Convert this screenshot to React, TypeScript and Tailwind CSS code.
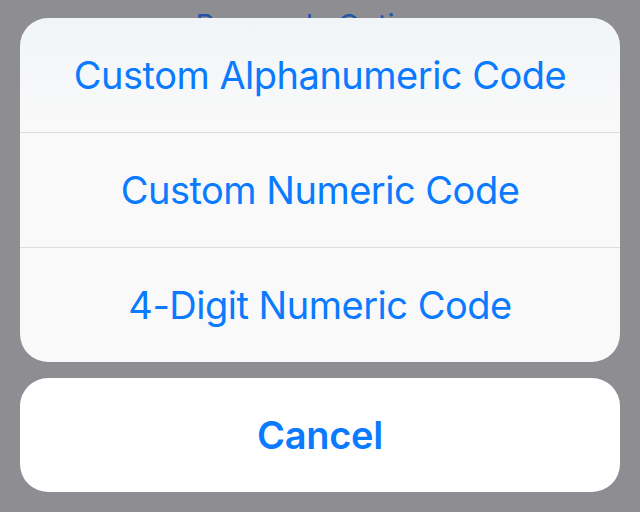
import React from 'react';

const options = ['Custom Alphanumeric Code', 'Custom Numeric Code', '4-Digit Numeric Code'];

export default function App() {
  return (
    <div
      className="w-[640px] h-[512px] bg-[#8e8d92] overflow-hidden"
      style={{ fontFamily: 'Inter, "Open Sans", "Liberation Sans", sans-serif' }}
    >
      {/* Title behind the sheet, mostly hidden */}
      <div className="h-[18px] overflow-hidden">
        <div className="pt-[8px] text-center text-[29px] leading-[34px] text-[#1f55ad]">
          Passcode Options
        </div>
      </div>

      <div className="px-5 flex flex-col gap-4">
        {/* Options group */}
        <div className="rounded-[28px] overflow-hidden bg-gradient-to-b from-[#f1f5f8] via-[#f9f9f9] via-30% to-[#f9f9f9]">
          {options.map((label, i) => (
            <div
              key={label}
              className={
                i > 0
                  ? 'h-[115px] border-t border-[#dcdcdc] flex items-center justify-center'
                  : 'h-[114px] flex items-center justify-center'
              }
            >
              <span className="text-[38px] text-[#0a7aff] tracking-[-0.5px]">{label}</span>
            </div>
          ))}
        </div>

        {/* Cancel */}
        <div className="h-[114px] rounded-[28px] bg-white flex items-center justify-center">
          <span className="text-[38px] font-semibold text-[#0a7aff] tracking-[-0.3px]">Cancel</span>
        </div>
      </div>
    </div>
  );
}
